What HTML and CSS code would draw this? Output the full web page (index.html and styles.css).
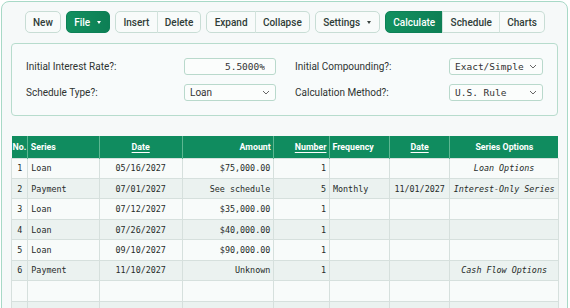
FILE: index.html
```html
<!DOCTYPE html>
<html lang="en">
<head>
<meta charset="utf-8">
<title>Loan Schedule</title>
<link rel="stylesheet" href="styles.css">
</head>
<body>
<div class="card">
  <div class="toolbar">
    <button class="btn single">New</button>
    <button class="btn single primary caret-btn">File <span class="caret"></span></button>
    <div class="group">
      <button class="btn">Insert</button><button class="btn">Delete</button>
    </div>
    <div class="group">
      <button class="btn">Expand</button><button class="btn">Collapse</button>
    </div>
    <button class="btn single caret-btn">Settings <span class="caret dark"></span></button>
    <div class="group">
      <button class="btn primary">Calculate</button><button class="btn">Schedule</button><button class="btn">Charts</button>
    </div>
  </div>

  <div class="options">
    <label class="lbl">Initial Interest Rate?:</label>
    <input class="field mono right" type="text" value="5.5000%">
    <label class="lbl lbl2">Initial Compounding?:</label>
    <span class="sel"><select class="field mono"><option>Exact/Simple</option></select><svg class="chev" viewBox="0 0 8 5" width="8" height="5"><path d="M1 1l3 3 3-3" fill="none" stroke="#666" stroke-width="1"/></svg></span>

    <label class="lbl">Schedule Type?:</label>
    <span class="sel"><select class="field sans"><option>Loan</option></select><svg class="chev" viewBox="0 0 8 5" width="8" height="5"><path d="M1 1l3 3 3-3" fill="none" stroke="#666" stroke-width="1"/></svg></span>
    <label class="lbl lbl2">Calculation Method?:</label>
    <span class="sel"><select class="field mono"><option>U.S. Rule</option></select><svg class="chev" viewBox="0 0 8 5" width="8" height="5"><path d="M1 1l3 3 3-3" fill="none" stroke="#666" stroke-width="1"/></svg></span>
  </div>

  <table class="grid">
    <colgroup>
      <col class="c-no"><col class="c-series"><col class="c-date"><col class="c-amt"><col class="c-num"><col class="c-freq"><col class="c-date2"><col class="c-opt">
    </colgroup>
    <thead>
      <tr>
        <th class="l tight">No.</th>
        <th class="l">Series</th>
        <th class="c"><u>Date</u></th>
        <th class="r">Amount</th>
        <th class="r"><u>Number</u></th>
        <th class="l">Frequency</th>
        <th class="c"><u>Date</u></th>
        <th class="c">Series Options</th>
      </tr>
    </thead>
    <tbody>
      <tr><td class="c">1</td><td class="l">Loan</td><td class="c">05/16/2027</td><td class="r">$75,000.00</td><td class="r">1</td><td class="l"></td><td class="c"></td><td class="c it">Loan Options</td></tr>
      <tr><td class="c">2</td><td class="l">Payment</td><td class="c">07/01/2027</td><td class="r">See schedule</td><td class="r">5</td><td class="l">Monthly</td><td class="c">11/01/2027</td><td class="c it">Interest-Only Series</td></tr>
      <tr><td class="c">3</td><td class="l">Loan</td><td class="c">07/12/2027</td><td class="r">$35,000.00</td><td class="r">1</td><td class="l"></td><td class="c"></td><td class="c it"></td></tr>
      <tr><td class="c">4</td><td class="l">Loan</td><td class="c">07/26/2027</td><td class="r">$40,000.00</td><td class="r">1</td><td class="l"></td><td class="c"></td><td class="c it"></td></tr>
      <tr><td class="c">5</td><td class="l">Loan</td><td class="c">09/10/2027</td><td class="r">$90,000.00</td><td class="r">1</td><td class="l"></td><td class="c"></td><td class="c it"></td></tr>
      <tr><td class="c">6</td><td class="l">Payment</td><td class="c">11/10/2027</td><td class="r">Unknown</td><td class="r">1</td><td class="l"></td><td class="c"></td><td class="c it">Cash Flow Options</td></tr>
      <tr><td></td><td></td><td></td><td></td><td></td><td></td><td></td><td></td></tr>
      <tr><td></td><td></td><td></td><td></td><td></td><td></td><td></td><td></td></tr>
      <tr><td></td><td></td><td></td><td></td><td></td><td></td><td></td><td></td></tr>
    </tbody>
  </table>
</div>
</body>
</html>
```

FILE: styles.css
```css
* { box-sizing: border-box; }
html, body { margin: 0; padding: 0; background: #ffffff; overflow: hidden; }
body { font-family: Roboto, "Liberation Sans", sans-serif; color: #2b2f2e; }

.card {
  margin: 1px 2px 0 1px;
  border: 1px solid #a8d9c7;
  border-radius: 8px;
  background: #f6f9f9;
  padding: 9px 8px 0 9px;
  height: 340px;
}

.toolbar {
  display: flex;
  justify-content: center;
  gap: 5px;
  height: 22px;
}
.btn {
  font-family: Roboto, "Liberation Sans", sans-serif;
  font-size: 10px;
  font-weight: 500;
  color: #2f3d38;
  background: #f8fbfa;
  border: 1px solid #c8ddd5;
  height: 22px;
  padding: 0 7.2px;
  margin: 0;
  display: inline-flex;
  align-items: center;
}
.caret-btn { gap: 7px; padding-right: 8px; }
.single { border-radius: 5px; }
.group { display: flex; }
.group .btn { border-radius: 0; }
.group .btn + .btn { border-left: 1px solid #d3e3dd; margin-left: -1px; }
.group .btn:first-child { border-radius: 5px 0 0 5px; }
.group .btn:last-child { border-radius: 0 5px 5px 0; }
.btn.primary {
  background: linear-gradient(90deg, #12905f, #0d7f55);
  border-color: #0d8157;
  color: #ffffff;
}
.caret {
  width: 0; height: 0;
  border-left: 2.5px solid transparent;
  border-right: 2.5px solid transparent;
  border-top: 3px solid #ffffff;
}
.caret.dark { border-top-color: #3a4440; }

.options {
  margin-top: 10px;
  width: 547px;
  border: 1px solid #b7dccd;
  border-radius: 4px;
  background: #f8fbfb;
  padding: 14px;
  display: grid;
  grid-template-columns: 158px 92px 1fr 94px;
  row-gap: 9px;
  align-items: center;
}
.lbl { font-size: 10px; color: #2e3331; line-height: 17px; }
.lbl2 { padding-left: 19px; }
.field {
  display: block;
  width: 100%;
  height: 17px;
  border: 1px solid #b9d9cc;
  border-radius: 3px;
  background: #fbfdfc;
  color: #333;
  margin: 0;
  outline: none;
}
.mono { font-family: "DejaVu Sans Mono", monospace; font-size: 9.5px; }
.sans { font-family: Roboto, "Liberation Sans", sans-serif; font-size: 10px; }
input.field { padding: 0 10px 0 5px; }
.right { text-align: right; }
.sel { position: relative; display: flex; height: 17px; }
select.field { appearance: none; -webkit-appearance: none; padding: 0 16px 0 5px; }
.chev { position: absolute; right: 6px; top: 6px; pointer-events: none; }

.grid {
  margin-top: 20px;
  width: 547px;
  border-collapse: collapse;
  table-layout: fixed;
}
.c-no { width: 16.3px; }
.c-series { width: 71.4px; }
.c-date { width: 83px; }
.c-amt { width: 91.6px; }
.c-num { width: 55.7px; }
.c-freq { width: 60px; }
.c-date2 { width: 60.3px; }
.c-opt { width: 108.7px; }

.grid th {
  background: #108c5f;
  color: #ffffff;
  font-size: 8.8px;
  font-weight: 700;
  height: 22px;
  padding: 0 2.5px;
  border-left: 1px solid #5db792;
  white-space: nowrap;
  overflow: hidden;
}
.grid th:first-child { border-left: none; }
.grid th.tight { padding: 0 1px; }
.grid th u { text-decoration-thickness: 1px; text-underline-offset: 1.5px; }
.grid td {
  font-family: "DejaVu Sans Mono", monospace;
  font-size: 8.4px;
  color: #262b29;
  height: 20.45px;
  padding: 0 3px;
  border: 1px solid #d6e0dd;
  white-space: nowrap;
  overflow: hidden;
}
.grid tbody tr:nth-child(odd) td { background: #f8fbfa; }
.grid tbody tr:nth-child(even) td { background: #ebf2f0; }
.grid .l { text-align: left; }
.grid .c { text-align: center; }
.grid .r { text-align: right; }
.grid .it { font-style: italic; }
.grid td.c:first-child { padding: 0; }
```
